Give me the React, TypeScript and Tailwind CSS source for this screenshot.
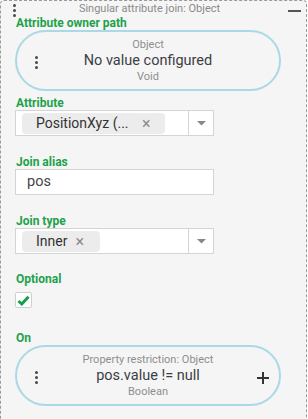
import React from "react";

const Dots = ({ className = "" }: { className?: string }) => (
  <div className={"flex flex-col items-center gap-[2px] " + className}>
    <span className="block w-[3px] h-[3px] rounded-full bg-[#4a4a4a]" />
    <span className="block w-[3px] h-[3px] rounded-full bg-[#4a4a4a]" />
    <span className="block w-[3px] h-[3px] rounded-full bg-[#4a4a4a]" />
  </div>
);

const Label = ({ children }: { children: React.ReactNode }) => (
  <div className="h-[15px] leading-[15px] text-[12px] font-bold text-[#1da24c] ml-[15px] pt-[1px]">{children}</div>
);

const Pill = ({ top, main, bottom, plus }: { top: string; main: string; bottom: string; plus?: boolean }) => (
  <div className="ml-[14px] w-[266px] h-[61px] rounded-full border-2 border-[#abd8e6] flex items-center relative">
    <Dots className="absolute left-[18px] top-[24px]" />
    <div className="flex-1 flex flex-col items-center">
      <div className="text-[11px] leading-[14px] text-[#8e8e8e]">{top}</div>
      <div className="text-[14.5px] leading-[18px] text-[#3a3f44]">{main}</div>
      <div className="text-[11px] leading-[14px] text-[#8e8e8e]">{bottom}</div>
    </div>
    {plus && (
      <div className="absolute left-[240px] top-[25px] w-[12px] h-[12px]">
        <span className="absolute left-0 top-[5px] w-[12px] h-[2px] bg-[#333]" />
        <span className="absolute left-[5px] top-0 w-[2px] h-[12px] bg-[#333]" />
      </div>
    )}
  </div>
);

const Select = ({ chip, chipW, textW }: { chip: string; chipW: string; textW: string }) => (
  <div className="ml-[14px] w-[199px] h-[26px] border border-[#d4d4d4] bg-white flex">
    <div className="flex-1 flex items-center pl-[6px]">
      <div className={"h-[21px] rounded-[4px] bg-[#ececec] flex items-center pl-[14px] " + chipW}>
        <span className={"text-[14px] text-[#333] leading-[21px] whitespace-nowrap " + textW}>{chip}</span>
        <span className="ml-[8px] text-[#8a8a8a] text-[16px] leading-[21px]">×</span>
      </div>
    </div>
    <div className="w-[25px] border-l border-[#d4d4d4] flex items-center justify-center">
      <svg width="9" height="6" viewBox="0 0 9 6">
        <path d="M0 1 H9 L4.5 5.5 Z" fill="#888" />
      </svg>
    </div>
  </div>
);

export default function App() {
  return (
    <div className="w-[307px] bg-white" style={{ fontFamily: "Roboto, 'Noto Sans', sans-serif" }}>
      <div className="w-[307px] h-[440px] border border-dashed border-[#9a9a9a] rounded-[4px] bg-[#f5f5f5] flex flex-col">
        <div className="h-[14px] relative">
          <Dots className="absolute left-[12px] top-[3px]" />
          <div className="absolute left-0 right-[8px] top-[1px] text-center text-[11px] leading-[14px] text-[#8a8a8a]">
            Singular attribute join: Object
          </div>
          <span className="absolute left-[287px] top-[9px] w-[13px] h-[2px] bg-[#555]" />
        </div>
        <Label>Attribute owner path</Label>
        <Pill top="Object" main="No value configured" bottom="Void" />
        <div className="h-[4px]" />
        <Label>Attribute</Label>
        <Select chip="PositionXyz (..." chipW="w-[143px]" textW="w-[98px]" />
        <div className="h-[18px]" />
        <Label>Join alias</Label>
        <div className="ml-[14px] w-[199px] h-[26px] border border-[#d4d4d4] bg-white flex items-center pl-[11px]">
          <span className="text-[14.5px] text-[#444]">pos</span>
        </div>
        <div className="h-[18px]" />
        <Label>Join type</Label>
        <Select chip="Inner" chipW="w-[78px]" textW="" />
        <div className="h-[17px]" />
        <Label>Optional</Label>
        <div className="h-[6px]" />
        <div className="ml-[14px] w-[17px] h-[16px] bg-white border border-[#cfcfcf] rounded-[2px] flex items-center justify-center">
          <svg width="13" height="11" viewBox="0 0 13 11">
            <path d="M1.5 6 L4.8 9 L11.5 1.8" stroke="#12a14a" strokeWidth="3" fill="none" strokeLinejoin="miter" />
          </svg>
        </div>
        <div className="h-[22px]" />
        <Label>On</Label>
        <Pill top="Property restriction: Object" main="pos.value != null" bottom="Boolean" plus />
      </div>
    </div>
  );
}
